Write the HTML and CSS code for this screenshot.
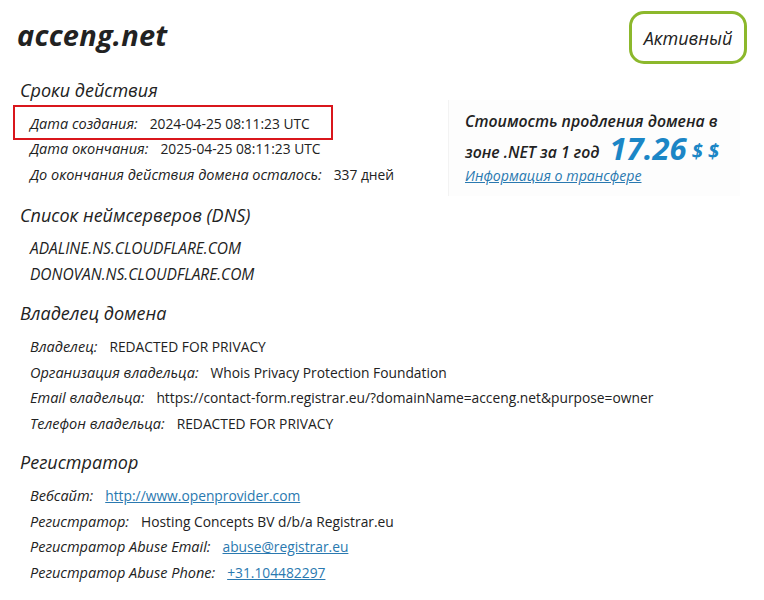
FILE: index.html
```html
<!DOCTYPE html>
<html lang="ru">
<head>
    <meta charset="UTF-8">
    <meta name="viewport" content="width=device-width, initial-scale=1.0">
    <title>acceng.net — Whois</title>
    <link rel="stylesheet" href="styles.css">
</head>
<body>
    <div class="whois">
        <div class="top">
            <h1 class="domain">acceng.net</h1>
            <div class="status">Активный</div>
        </div>

        <div class="dates-row">
            <div class="section">
                <h2>Сроки действия</h2>
                <div class="row marked"><span class="label">Дата создания:</span><span class="value">2024-04-25 08:11:23 UTC</span></div>
                <div class="row"><span class="label">Дата окончания:</span><span class="value">2025-04-25 08:11:23 UTC</span></div>
                <div class="row"><span class="label">До окончания действия домена осталось:</span><span class="value">337 дней</span></div>
            </div>
            <div class="price">
                <div class="price-text">Стоимость продления домена в</div>
                <div class="price-text second">зоне .NET за 1 год <span class="sum">17.26</span><span class="cur">$ $</span></div>
                <a href="#" class="transfer">Информация о трансфере</a>
            </div>
        </div>

        <div class="section">
            <h2>Список неймсерверов (DNS)</h2>
            <div class="row ns">ADALINE.NS.CLOUDFLARE.COM</div>
            <div class="row ns">DONOVAN.NS.CLOUDFLARE.COM</div>
        </div>

        <div class="section">
            <h2>Владелец домена</h2>
            <div class="row"><span class="label">Владелец:</span><span class="value">REDACTED FOR PRIVACY</span></div>
            <div class="row"><span class="label">Организация владельца:</span><span class="value">Whois Privacy Protection Foundation</span></div>
            <div class="row"><span class="label">Email владельца:</span><span class="value">https://contact-form.registrar.eu/?domainName=acceng.net&amp;purpose=owner</span></div>
            <div class="row"><span class="label">Телефон владельца:</span><span class="value">REDACTED FOR PRIVACY</span></div>
        </div>

        <div class="section">
            <h2>Регистратор</h2>
            <div class="row"><span class="label">Вебсайт:</span><a href="#" class="value link">http://www.openprovider.com</a></div>
            <div class="row"><span class="label">Регистратор:</span><span class="value">Hosting Concepts BV d/b/a Registrar.eu</span></div>
            <div class="row"><span class="label">Регистратор Abuse Email:</span><a href="#" class="value link">abuse@registrar.eu</a></div>
            <div class="row"><span class="label">Регистратор Abuse Phone:</span><a href="#" class="value link">+31.104482297</a></div>
        </div>
    </div>
</body>
</html>
```

FILE: styles.css
```css
body {
    margin: 0;
    background: #fff;
    color: #222;
    font-family: "Open Sans", Arial, sans-serif;
}
.whois {
    padding: 11px 17px 0 17px;
}
.top {
    display: flex;
    justify-content: space-between;
    align-items: flex-start;
}
.domain {
    margin: 4px 0 0 0;
    font-size: 29px;
    font-style: italic;
    font-weight: bold;
    color: #222;
    letter-spacing: 0.2px;
}
.status {
    width: 118px;
    height: 53px;
    box-sizing: border-box;
    border: 3px solid #8cb82c;
    border-radius: 15px;
    display: flex;
    align-items: center;
    justify-content: center;
    font-style: italic;
    font-size: 18px;
    color: #222;
}
h2 {
    margin: 0 0 6px 0;
    font-size: 18px;
    font-style: italic;
    font-weight: normal;
    color: #222;
    height: 30px;
    line-height: 30px;
    padding-left: 3px;
}
.section {
    margin-bottom: 11px;
}
.dates-row {
    display: flex;
    align-items: flex-start;
    margin-top: 11px;
}
.dates-row .section {
    width: 431px;
    margin-bottom: 13px;
}
.dates-row h2 {
    margin-bottom: 0;
}
.row {
    height: 25.5px;
    line-height: 25.5px;
    font-size: 13.8px;
    padding-left: 13px;
    white-space: nowrap;
}
.row.marked {
    margin-left: -4px;
    padding-left: 15px;
    width: 301px;
    height: 31px;
    line-height: 33px;
    border: 2px solid #d9161c;
    margin-bottom: -4px;
}
.label {
    font-style: italic;
    font-size: 14.5px;
    margin-right: 12px;
}
.value {
    color: #222;
}
.ns {
    font-style: italic;
    font-size: 15.5px;
}
.link {
    color: #2a79b0;
    text-decoration: underline;
}
.price {
    margin-top: 25px;
    padding: 8px 0 10px 16px;
    width: 275px;
    background: #fdfdfd;
    border-left: 1px solid #f3f3f3;
}
.price-text {
    font-size: 15.8px;
    font-style: italic;
    font-weight: 600;
    line-height: 27px;
    white-space: nowrap;
}
.price-text.second {
    margin-top: 2px;
}
.sum {
    display: inline-block;
    margin-left: 6px;
    font-size: 31px;
    font-weight: bold;
    color: #1b86c6;
    line-height: 22px;
    height: 22px;
    vertical-align: -2px;
}
.cur {
    margin-left: 5px;
    font-size: 20px;
    font-weight: bold;
    color: #1b86c6;
}
.transfer {
    display: block;
    font-size: 14.2px;
    font-style: italic;
    color: #2a79b0;
    line-height: 20px;
}
```
